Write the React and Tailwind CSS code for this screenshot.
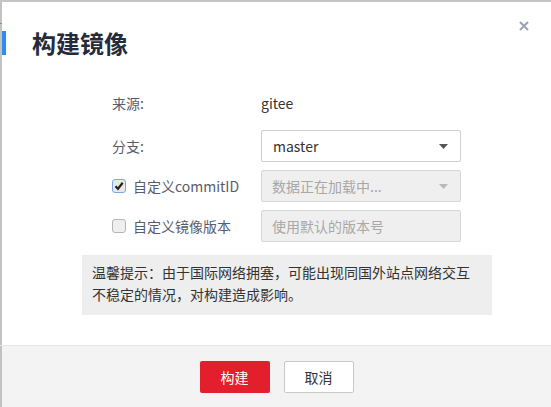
import React from 'react';

const FONT = "font-['Noto_Sans_CJK_SC','Noto_Sans',sans-serif]";

function Checkbox({ checked }) {
  return (
    <span
      className={`flex h-[14px] w-[14px] items-center justify-center rounded-[3px] border ${
        checked ? 'border-[#7aa7e8] bg-[#e8e8e8]' : 'border-[#b5b5b5] bg-[#efefef]'
      }`}
    >
      {checked && (
        <svg width="10" height="10" viewBox="0 0 10 10">
          <path d="M1.5 5.2 L4 7.8 L8.7 1.8" fill="none" stroke="#222" strokeWidth="2.2" />
        </svg>
      )}
    </span>
  );
}

function Caret({ color = '#555' }) {
  return (
    <svg width="9" height="5" viewBox="0 0 9 5">
      <path d="M0 0 H9 L4.5 5 Z" fill={color} />
    </svg>
  );
}

export default function App() {
  return (
    <div className={`flex h-[407px] w-[551px] flex-col overflow-hidden border-t-2 border-[#c4c4c4] bg-white ${FONT}`}>
      <div className="flex flex-1">
        {/* page behind the dialog */}
        <div className="flex w-[2px] flex-col bg-[#c2c2c2]">
          <div className="h-[21px]" />
          <div className="h-[1px] bg-[#8f8f8f]" />
        </div>

        <div className="flex flex-1 flex-col">
          {/* header */}
          <div className="flex h-[85px] items-start">
            <div className="mt-[29px] h-[24px] w-[4px] bg-[#2f8cf0]" />
            <div className="ml-[26px] mt-[23px] text-[24px] font-bold leading-[36px] text-[#252b3a]">构建镜像</div>
            <div className="flex-1" />
            <div className="mr-[22px] mt-[19px]">
              <svg width="10" height="10" viewBox="0 0 10 10">
                <path d="M1 1 L9 9 M9 1 L1 9" stroke="#9aa3ae" strokeWidth="2" />
              </svg>
            </div>
          </div>

          {/* form */}
          <div className="flex flex-col pl-[110px] text-[14px] text-[#333]">
            <div className="flex h-[32px] items-center">
              <span className="w-[149px] text-[#575d6c]">来源:</span>
              <span>gitee</span>
            </div>
            <div className="mt-[11px] flex h-[32px] items-center">
              <span className="w-[149px] text-[#575d6c]">分支:</span>
              <div className="flex h-[32px] w-[200px] items-center justify-between rounded-[2px] border border-[#cfcfcf] bg-white pl-[11px] pr-[12px]">
                <span>master</span>
                <Caret color="#555" />
              </div>
            </div>
            <div className="mt-[8px] flex h-[32px] items-center">
              <div className="flex w-[149px] items-center gap-[7px]">
                <Checkbox checked />
                <span className="text-[#575d6c]">自定义commitID</span>
              </div>
              <div className="flex h-[32px] w-[200px] items-center justify-between rounded-[2px] border border-[#d6d6d6] bg-[#efefef] pl-[10px] pr-[12px] text-[#a8a8a8]">
                <span>数据正在加载中...</span>
                <Caret color="#b9b9b9" />
              </div>
            </div>
            <div className="mt-[8px] flex h-[32px] items-center">
              <div className="flex w-[149px] items-center gap-[7px]">
                <Checkbox />
                <span className="text-[#575d6c]">自定义镜像版本</span>
              </div>
              <div className="flex h-[32px] w-[200px] items-center rounded-[2px] border border-[#d6d6d6] bg-[#efefef] pl-[10px] text-[#a8a8a8]">
                <span>使用默认的版本号</span>
              </div>
            </div>
          </div>

          {/* tip */}
          <div className="ml-[80px] mt-[13px] h-[60px] w-[410px] bg-[#eeeeee] px-[10px] pt-[6px] text-[14px] leading-[22px] text-[#333]">
            温馨提示：由于国际网络拥塞，可能出现同国外站点网络交互不稳定的情况，对构建造成影响。
          </div>
          <div className="flex-1" />
        </div>
      </div>

      {/* footer */}
      <div className="flex h-[62px] border-t border-[#e6e6e6]">
        <div className="w-[2px] bg-[#c2c2c2]" />
        <div className="flex flex-1 items-start justify-center gap-[14px] bg-[#f3f3f3] pt-[15px]">
          <button className="h-[32px] w-[70px] rounded-[2px] bg-[#e31f2e] text-[14px] text-white">构建</button>
          <button className="h-[32px] w-[70px] rounded-[2px] border border-[#c9c9c9] bg-white text-[14px] text-[#333]">取消</button>
        </div>
      </div>
    </div>
  );
}
